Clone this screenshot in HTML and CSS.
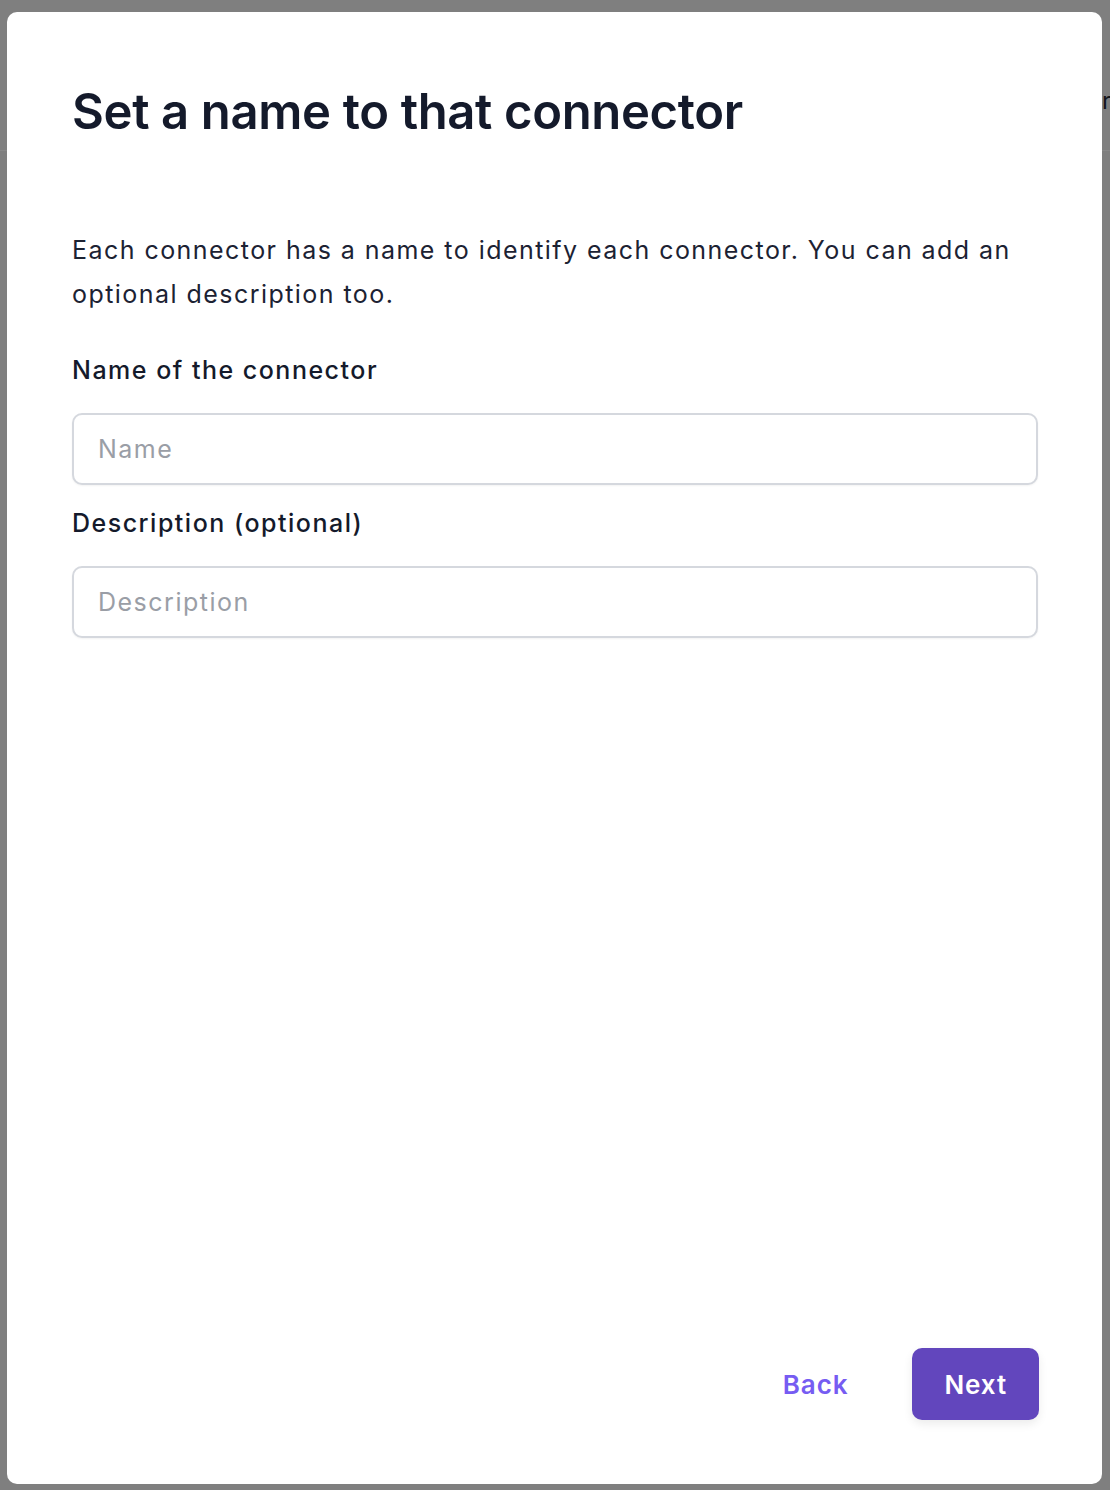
FILE: index.html
```html
<!DOCTYPE html>
<html lang="en">
<head>
<meta charset="utf-8">
<title>Set a name to that connector</title>
<link rel="stylesheet" href="styles.css">
</head>
<body>
<div class="backdrop">
  <header class="page-header"><span class="page-header-text">Connector</span></header>
</div>
<div class="modal" role="dialog" aria-labelledby="modal-title">
  <h1 class="modal-title" id="modal-title">Set a name to that connector</h1>
  <p class="modal-desc">Each connector has a name to identify each connector. You can add an optional description too.</p>
  <label class="field-label" for="name">Name of the connector</label>
  <input class="field-input" id="name" type="text" placeholder="Name">
  <label class="field-label field-label-second" for="desc">Description (optional)</label>
  <input class="field-input" id="desc" type="text" placeholder="Description">
  <div class="modal-footer">
    <button class="btn btn-link" type="button">Back</button>
    <button class="btn btn-primary" type="button">Next</button>
  </div>
</div>
</body>
</html>
```

FILE: styles.css
```css
* { box-sizing: border-box; }

html, body {
  margin: 0;
  padding: 0;
  width: 1110px;
  height: 1490px;
  overflow: hidden;
}

body {
  background: #7f7f7f;
  font-family: Inter, "Noto Sans", "Liberation Sans", sans-serif;
  color: #161b2c;
  position: relative;
}

.backdrop {
  position: absolute;
  inset: 0;
}

.page-header {
  height: 151px;
  border-bottom: 1px solid #888888;
  display: flex;
  align-items: flex-start;
  justify-content: flex-end;
  padding-top: 86px;
}

.page-header-text {
  font-size: 24px;
  line-height: 30px;
  color: #12141b;
  margin-right: -1px;
}

.modal {
  position: absolute;
  left: 7px;
  top: 12px;
  width: 1095px;
  height: 1472px;
  background: #ffffff;
  border-radius: 10px;
  padding: 0 64px 64px 65px;
  display: flex;
  flex-direction: column;
}

.modal-title {
  margin: 70px 0 0 0;
  font-size: 49px;
  line-height: 60px;
  font-weight: 600;
  letter-spacing: -0.35px;
  color: #141a2b;
}

.modal-desc {
  margin: 86px 0 0 0;
  font-size: 25px;
  line-height: 44px;
  letter-spacing: 1.45px;
  color: #1c2233;
}

.field-label {
  display: block;
  margin-top: 38px;
  font-size: 25px;
  line-height: 32px;
  font-weight: 500;
  letter-spacing: 1.5px;
  color: #141a2b;
}

.field-label-second {
  margin-top: 22px;
}

.field-input {
  display: block;
  width: 100%;
  height: 72px;
  margin-top: 27px;
  padding: 0 24px;
  border: 2px solid #d5d8de;
  border-radius: 10px;
  background: #ffffff;
  box-shadow: 0 1px 2px rgba(0, 0, 0, 0.05);
  font-family: inherit;
  font-size: 25px;
  letter-spacing: 1.5px;
  color: #141a2b;
  outline: none;
}

.field-input::placeholder {
  color: #9a9ea6;
}

.modal-footer {
  margin-top: auto;
  margin-right: -1px;
  display: flex;
  justify-content: flex-end;
  gap: 32px;
}

.btn {
  height: 72px;
  padding: 0 32px;
  border: none;
  border-radius: 10px;
  font-family: inherit;
  font-size: 26px;
  font-weight: 600;
  letter-spacing: 0.9px;
  cursor: pointer;
}

.btn-link {
  background: transparent;
  color: #765cf2;
}

.btn-primary {
  background: #6246bd;
  color: #ffffff;
  box-shadow: 0 4px 10px rgba(0, 0, 0, 0.08);
}
```
